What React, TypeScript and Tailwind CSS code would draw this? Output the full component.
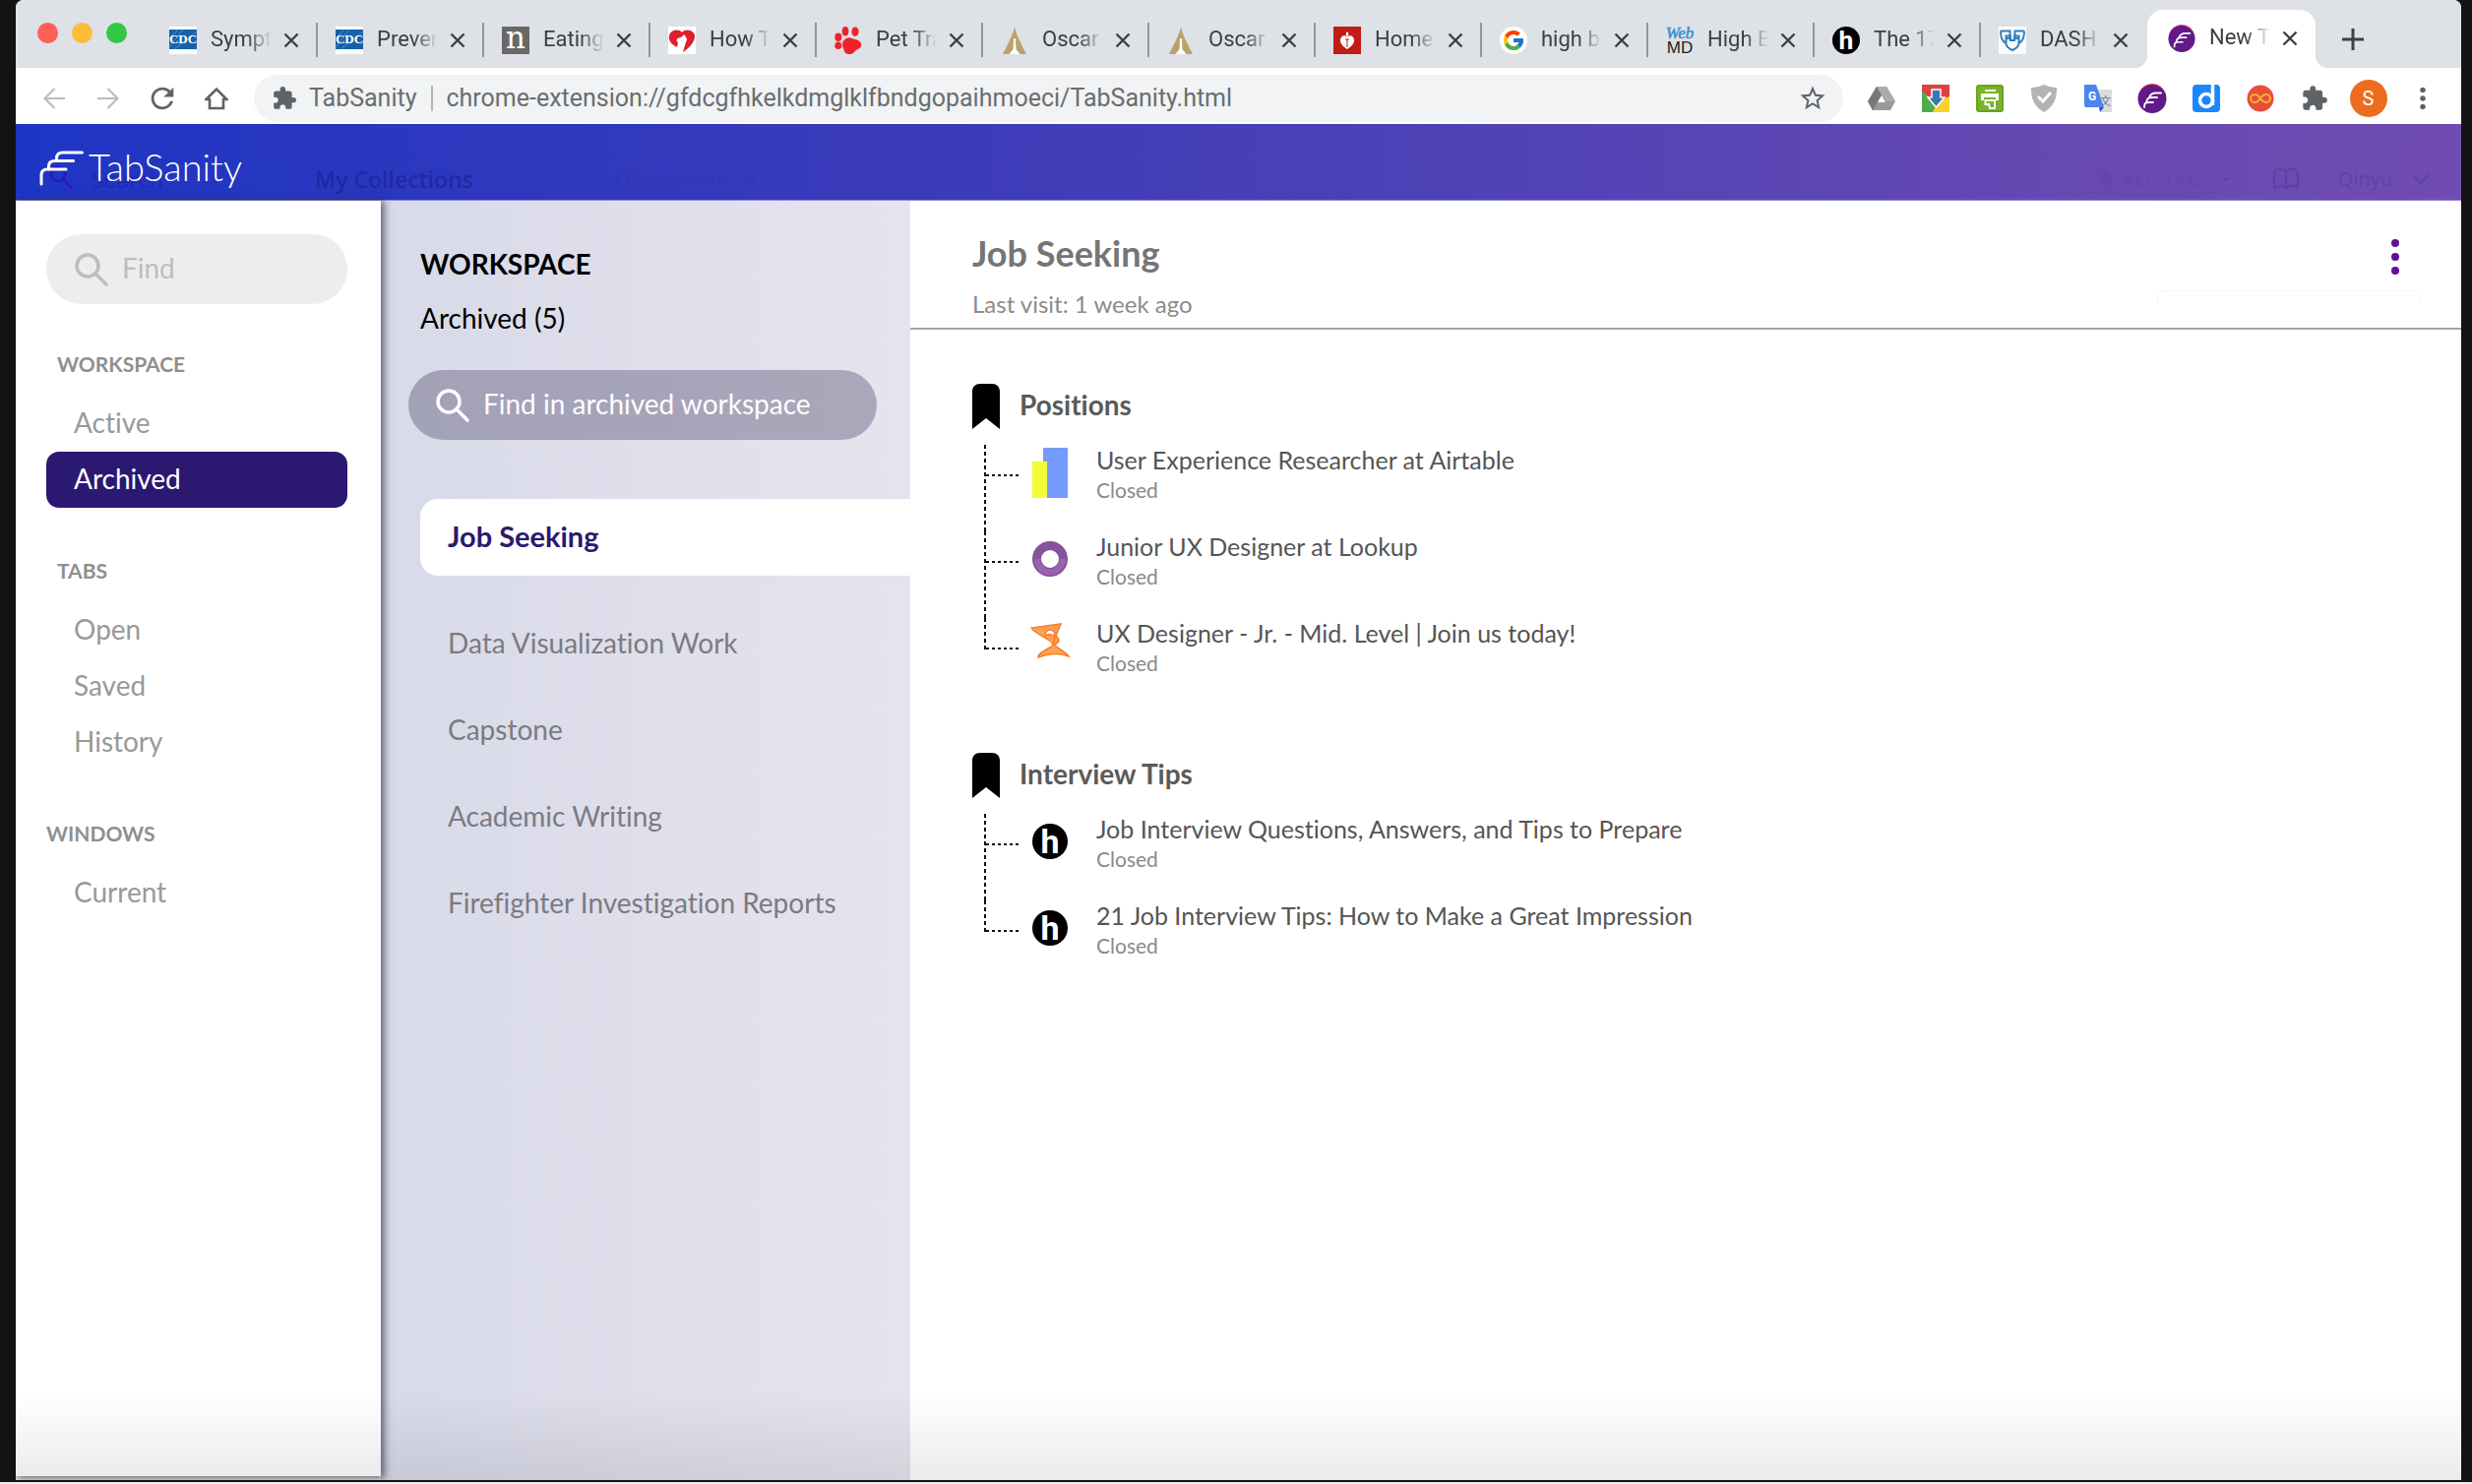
import type { ReactNode } from 'react';
import { FaTag, FaCaretDown } from 'react-icons/fa';
import { FcGoogle } from 'react-icons/fc';
import { MdExtension, MdRefresh, MdStarBorder, MdMoreVert } from 'react-icons/md';

/* ---------- favicons ---------- */

const Cdc = () => (
  <svg viewBox="0 0 28 28" className="size-7" aria-hidden="true">
    <rect width="28" height="28" fill="#fff" />
    <rect y="3" width="28" height="20" fill="#1661ab" />
    <path d="M0 21 14 3M5 23 28 5M0 12 9 3" stroke="#4a8bc9" strokeWidth="1" />
    <text x="14" y="17" textAnchor="middle" fontFamily="Liberation Serif" fontWeight="700" fontSize="13" fill="#fff">CDC</text>
  </svg>
);

const LetterN = () => (
  <svg viewBox="0 0 28 28" className="size-7" aria-hidden="true">
    <rect width="28" height="28" fill="#6a6866" />
    <text x="14" y="22" textAnchor="middle" fontFamily="DejaVu Serif, serif" fontSize="31" fill="#fff">n</text>
  </svg>
);

const HeartDog = () => (
  <svg viewBox="0 0 28 28" className="size-7" aria-hidden="true">
    <rect width="28" height="28" fill="#fff" />
    <path d="M14 6C11 2 3 3 1 9c-1 5 2 9 8 12l1-5-2-2 5-3 3-3 3 5-2 6-2 7c6-4 11-9 12-15C28 4 18 1 14 6Z" fill="#e01f2d" />
    <path d="M9 12l5-1 3-2 2 4-2 4-7-1z" fill="#fff" />
  </svg>
);

const Paw = () => (
  <svg viewBox="0 0 28 28" className="size-7" fill="#ee222d" aria-hidden="true">
    <ellipse cx="11" cy="4.700" rx="3.400" ry="4.700" />
    <ellipse cx="21" cy="5.200" rx="3.600" ry="4.800" />
    <ellipse cx="3.800" cy="10.700" rx="3.500" ry="4.200" />
    <ellipse cx="3.800" cy="19.300" rx="3.500" ry="3.800" />
    <path d="M12 12c3-2 6 0 9 1 4 1 7 3 6 7-1 3-5 3-7 6-2 3-9 3-10-1-.5-3-2-4-2-7 0-3 2-5 4-6Z" />
  </svg>
);

const Oscar = () => (
  <svg viewBox="0 0 28 28" className="size-7" aria-hidden="true">
    <path d="M14 0C15 7 21 18 26 28H2C7 18 13 7 14 0Z" fill="#b9a26a" />
    <path d="M14 12c1.500 0 1.500 2 1 3l.5 8 4 5H8.500l4-5 .5-8c-.5-1-.5-3 1-3Z" fill="#fff" />
  </svg>
);

const HeartTorch = () => (
  <svg viewBox="0 0 28 28" className="size-7" aria-hidden="true">
    <rect width="28" height="28" fill="#bf1d16" />
    <path d="M14 11c-2-3-7-2-7 3 0 4 3 6 7 9 4-3 7-5 7-9 0-5-5-6-7-3Z" fill="#fff" />
    <path d="M14 5c2 2 1.500 4 0 6-1.500-2-2-4 0-6Z" fill="#fff" />
    <path d="M14 13v8M12 13h4" stroke="#bf1d16" strokeWidth="1" />
  </svg>
);

const Google = () => (
  <span className="grid size-7 place-items-center rounded-full bg-white">
    <FcGoogle className="size-6" />
  </span>
);

const WebMd = () => (
  <svg viewBox="0 0 28 28" className="size-7" aria-hidden="true">
    <text x="14" y="12" textAnchor="middle" fontFamily="Liberation Serif" fontStyle="italic" fontSize="17" fill="#2f8fd0" stroke="#2f8fd0" strokeWidth="0.500">Web</text>
    <text x="14" y="27" textAnchor="middle" fontFamily="Liberation Sans" fontSize="17" fill="#222">MD</text>
  </svg>
);

const RoundH = ({ className = 'size-7' }: { className?: string }) => (
  <svg viewBox="0 0 36 36" className={className} aria-hidden="true">
    <circle cx="18" cy="18" r="18" fill="#000" />
    <text x="18" y="30" textAnchor="middle" fontFamily="Roboto" fontWeight="700" fontSize="34" fill="#fff">h</text>
  </svg>
);

const Shields = () => (
  <svg viewBox="0 0 28 28" className="size-7" aria-hidden="true">
    <rect width="28" height="28" fill="#fbfcfa" />
    <g fill="none" stroke="#2f7fbd" strokeWidth="2">
      <path d="M2 4.500h9.500V12H8M2 4.500c0 6 1 10 5 12" />
      <path d="M26 4.500h-9.500V12H20M26 4.500c0 6-1 10-5 12" />
      <path d="M12 9.500H7.500V18c1 3 3 4.500 6.500 6 3.500-1.500 5.500-3 6.500-6V9.500H16V14h-4Z" />
    </g>
  </svg>
);

const Feather = ({ className = 'size-7' }: { className?: string }) => (
  <svg viewBox="0 0 30 30" className={className} aria-hidden="true">
    <circle cx="15" cy="14" r="14" fill="#ee4266" />
    <circle cx="15" cy="15.500" r="14.500" fill="#611a86" />
    <path d="M7 24c0-4 1-5 5-5h4M9 19c1-4 2-5 6-5h5M12 14c1-3 3-4.500 7-4.500h5" fill="none" stroke="#fff" strokeWidth="1.800" strokeLinecap="round" />
  </svg>
);

/* ---------- extension icons ---------- */

const Drive = () => (
  <svg viewBox="0 0 28 28" className="size-7" aria-hidden="true">
    <path d="M9 2h10l9 15-5 9H5l-5-9Z" fill="#9a9a9a" />
    <path d="M9 2 0 17l5 9 9-15Z" fill="#777" />
    <path d="M9 2h10l9 15H18Z" fill="#aaa" />
    <path d="M14 11l4 7h-8Z" fill="#fff" />
  </svg>
);

const Downloader = () => (
  <svg viewBox="0 0 28 28" className="size-7" aria-hidden="true">
    <rect width="28" height="28" fill="#fcd12f" />
    <path d="M0 0h28v12L14 17 0 8Z" fill="#e0403f" />
    <path d="M0 6 14 22l-3 6H0Z" fill="#4fae4b" />
    <path d="M10 5h9v8h4l-8.500 10L6 13h4Z" fill="#3b78b0" stroke="#fff" strokeWidth="1.500" />
  </svg>
);

const Printer = () => (
  <svg viewBox="0 0 28 28" className="size-7" aria-hidden="true">
    <rect width="28" height="28" rx="3" fill="#79b22c" />
    <rect x="1" y="1" width="26" height="26" rx="3" fill="none" stroke="#66a01f" strokeWidth="1.500" />
    <path d="M9 5h11v2H9zM5 9h18v7h-3v-3H8v3H5z" fill="#fff" />
    <path d="M9.500 16h9.500v8h-5l-1-4H9.500Z" fill="none" stroke="#fff" strokeWidth="2" />
  </svg>
);

const ShieldCheck = () => (
  <svg viewBox="0 0 28 28" className="size-7" aria-hidden="true">
    <path d="M14 0c4 2 9 3 13 3 0 12-3 19-13 25C4 22 1 15 1 3c4 0 9-1 13-3Z" fill="#b3b3b3" />
    <path d="M8 12l5 5 8-9" fill="none" stroke="#fff" strokeWidth="3" />
  </svg>
);

const Translate = () => (
  <svg viewBox="0 0 28 28" className="size-7" aria-hidden="true">
    <path d="M13 5h15v23H17Z" fill="#dcdcdc" />
    <text x="21.500" y="21" textAnchor="middle" fontFamily="Noto Sans CJK SC, sans-serif" fontSize="11" fill="#5c7a92">文</text>
    <path d="M0 0h12l8 23H2a2 2 0 0 1-2-2Z" fill="#4a86ee" />
    <path d="M15 23h5l-4 5Z" fill="#2c56c4" />
    <text x="8" y="16" textAnchor="middle" fontFamily="Roboto" fontWeight="700" fontSize="12" fill="#fff">G</text>
  </svg>
);

const LetterD = () => (
  <svg viewBox="0 0 28 28" className="size-7" aria-hidden="true">
    <rect width="28" height="28" rx="4" fill="#1a86ff" />
    <circle cx="14" cy="16" r="6.500" fill="none" stroke="#fff" strokeWidth="3.500" />
    <path d="M20.500 0v21" stroke="#fff" strokeWidth="3.500" />
  </svg>
);

const Infinity8 = () => (
  <svg viewBox="0 0 28 28" className="size-7" aria-hidden="true">
    <circle cx="14" cy="14" r="13.500" fill="#e84c3d" />
    <path d="M14 14c-2-3-4-4-6-4a4 4 0 0 0 0 8c2 0 4-1 6-4s4-4 6-4a4 4 0 0 1 0 8c-2 0-4-1-6-4Z" fill="none" stroke="#f0b429" strokeWidth="2" />
  </svg>
);

/* ---------- browser chrome ---------- */

const tabs: { title: string; icon: ReactNode }[] = [
  { title: 'Symptoms', icon: <Cdc /> },
  { title: 'Prevention', icon: <Cdc /> },
  { title: 'Eating', icon: <LetterN /> },
  { title: 'How To', icon: <HeartDog /> },
  { title: 'Pet Travel', icon: <Paw /> },
  { title: 'Oscar', icon: <Oscar /> },
  { title: 'Oscar', icon: <Oscar /> },
  { title: 'Home', icon: <HeartTorch /> },
  { title: 'high blood', icon: <Google /> },
  { title: 'High Blood', icon: <WebMd /> },
  { title: 'The 17', icon: <RoundH /> },
  { title: 'DASH', icon: <Shields /> },
];

const Cross = () => (
  <svg viewBox="0 0 16 16" className="size-4" aria-hidden="true">
    <path d="M1.500 1.500l13 13M14.500 1.500l-13 13" stroke="#3c4043" strokeWidth="2.400" />
  </svg>
);

function TabContent({ title, icon }: { title: string; icon: ReactNode }) {
  return (
    <>
      <span className="shrink-0">{icon}</span>
      <span className="ml-3.5 w-[62px] overflow-hidden pb-[2px] whitespace-nowrap text-[22px] leading-7 text-[#3c4043] [mask-image:linear-gradient(to_right,black_60%,transparent)]">
        {title}
      </span>
      <button aria-label={`Close ${title}`} className="ml-3 shrink-0">
        <Cross />
      </button>
    </>
  );
}

function TabStrip() {
  return (
    <div className="flex h-[69px] items-start bg-[#dee1e6] font-[Roboto,sans-serif]">
      <div className="mt-[23px] flex w-[138px] shrink-0 gap-3.5 pl-[22px]">
        <button aria-label="Close window" className="size-[21px] rounded-full bg-[#fe5f58]" />
        <button aria-label="Minimize window" className="size-[21px] rounded-full bg-[#febc3b]" />
        <button aria-label="Zoom window" className="size-[21px] rounded-full bg-[#33c748]" />
      </div>
      {tabs.map((tab, i) => (
        <div
          key={i}
          className={`mt-[23px] flex h-[35px] w-[169px] shrink-0 items-center pl-[18px] ${i < tabs.length - 1 ? 'border-r-2 border-[#93979c]' : ''}`}
        >
          <TabContent {...tab} />
        </div>
      ))}
      <div className="relative mt-2.5 flex h-[59px] w-[171px] shrink-0 items-center rounded-t-2xl bg-white pb-[2px] pl-[21px]">
        <span className="absolute bottom-0 -left-3 size-3 bg-[radial-gradient(circle_at_top_left,#dee1e6_12px,#fff_12px)]" />
        <TabContent title="New Tab" icon={<Feather />} />
        <span className="absolute -right-3 bottom-0 size-3 bg-[radial-gradient(circle_at_top_right,#dee1e6_12px,#fff_12px)]" />
      </div>
      <button aria-label="New tab" className="mt-[29px] ml-[27px]">
        <svg viewBox="0 0 22 22" className="size-[22px]" aria-hidden="true">
          <path d="M11 0v22M0 11h22" stroke="#3c4043" strokeWidth="3" />
        </svg>
      </button>
    </div>
  );
}

function ToolButton({ label, children }: { label: string; children: ReactNode }) {
  return (
    <button aria-label={label} className="grid h-12 w-[55px] shrink-0 place-items-center">
      {children}
    </button>
  );
}

function Toolbar() {
  return (
    <div className="flex h-[57px] items-center bg-white pt-[7px] pr-3 pb-[2px] pl-[11px] font-[Roboto,sans-serif]">
      <ToolButton label="Back">
        <svg viewBox="0 0 22 22" className="size-[22px]" fill="none" stroke="#babcbe" strokeWidth="2.200" aria-hidden="true">
          <path d="M22 11H2M11.500 1 1.500 11l10 10" />
        </svg>
      </ToolButton>
      <ToolButton label="Forward">
        <svg viewBox="0 0 22 22" className="size-[22px]" fill="none" stroke="#babcbe" strokeWidth="2.200" aria-hidden="true">
          <path d="M0 11h20M10.500 1l10 10-10 10" />
        </svg>
      </ToolButton>
      <ToolButton label="Reload">
        <MdRefresh className="size-[34px] text-[#5f6368]" />
      </ToolButton>
      <ToolButton label="Home">
        <svg viewBox="0 0 24 24" className="size-6" fill="none" stroke="#5f6368" strokeWidth="2.600" aria-hidden="true">
          <path d="M1.500 13 12 2.500 22.500 13H19v9H5v-9Z" />
        </svg>
      </ToolButton>
      <div className="ml-[11px] flex h-12 min-w-0 flex-1 items-center rounded-full bg-[#f1f3f4] pr-4 pl-[18px] text-[#6a6d70]">
        <MdExtension className="size-[26px] shrink-0 text-[#5f6368]" />
        <span className="ml-3 text-[25px] leading-8">TabSanity</span>
        <span className="mx-3.5 h-[26px] w-[2px] shrink-0 bg-[#b4b7ba]" />
        <input
          aria-label="Address"
          defaultValue="chrome-extension://gfdcgfhkelkdmglklfbndgopaihmoeci/TabSanity.html"
          className="min-w-0 flex-1 bg-transparent text-[25px] leading-8 text-[#6a6d70] outline-none"
        />
        <button aria-label="Bookmark this page">
          <MdStarBorder className="size-[30px] text-[#5f6368]" />
        </button>
      </div>
      <div className="ml-[11px] flex">
        <ToolButton label="Drive"><Drive /></ToolButton>
        <ToolButton label="Downloads"><Downloader /></ToolButton>
        <ToolButton label="Print"><Printer /></ToolButton>
        <ToolButton label="Protection"><ShieldCheck /></ToolButton>
        <ToolButton label="Translate"><Translate /></ToolButton>
        <ToolButton label="TabSanity"><Feather className="size-[30px]" /></ToolButton>
        <ToolButton label="Dictionary"><LetterD /></ToolButton>
        <ToolButton label="Infinity"><Infinity8 /></ToolButton>
        <ToolButton label="Extensions"><MdExtension className="size-7 text-[#5f6368]" /></ToolButton>
        <ToolButton label="Profile">
          <span className="grid size-[38px] place-items-center rounded-full bg-[#ee6c1f] text-[20px] leading-6 text-white">S</span>
        </ToolButton>
        <ToolButton label="Menu"><MdMoreVert className="size-[34px] text-[#5f6368]" /></ToolButton>
      </div>
    </div>
  );
}

/* ---------- application ---------- */

function Header() {
  return (
    <header className="relative flex h-[78px] items-center border-b border-[#8d85d6] bg-[linear-gradient(to_right,#1e35c4,#3a3bb9_36%,#5544b5_66%,#6749b2_84%,#704cb1)] pl-6">
      <div aria-hidden="true" className="absolute inset-0 flex items-end overflow-hidden pb-[5px] pl-[34px] font-['Open_Sans',sans-serif] text-[23px] leading-8 text-[#17208f]/60">
        <svg viewBox="0 0 24 24" className="mb-1.5 size-6" fill="none" stroke="#3014b8" strokeOpacity="0.800" strokeWidth="3">
          <circle cx="9" cy="9" r="7" />
          <path d="M14 14l9 9" />
        </svg>
        <span className="ml-[19px] w-[227px] opacity-70">Search</span>
        <span className="font-semibold">My Collections</span>
        <span className="ml-[84px] text-[22px] opacity-15">+&nbsp; Add Organization</span>
        <div className="mr-8 ml-auto flex items-center text-[#4d2c98]/40">
          <FaTag className="size-4 opacity-30" />
          <span className="ml-2 text-[18px] tracking-widest opacity-50">ALL TAGS</span>
          <FaCaretDown className="ml-1.5 size-3 opacity-70" />
          <svg viewBox="0 0 26 22" className="ml-[42px] h-[22px] w-[26px]" fill="none" stroke="currentColor" strokeWidth="2">
            <path d="M13 3v16M1 20V4c3-4 9-4 12-1 3-3 9-3 12 1v16c-4-3-9-3-12 0-3-3-8-3-12 0Z" />
          </svg>
          <span className="ml-10 text-[20px]">Qinyu</span>
          <svg viewBox="0 0 18 10" className="ml-5 h-2.5 w-[18px]" fill="none" stroke="currentColor" strokeWidth="2.500">
            <path d="M1 1l8 8 8-8" />
          </svg>
        </div>
      </div>
      <a href="#home" className="relative flex items-center gap-1 pt-3 text-white">
        <svg viewBox="0 0 46 36" className="h-9 w-[46px]" fill="none" stroke="#fff" strokeWidth="3" strokeLinecap="round" aria-hidden="true">
          <path d="M2 34V25c0-4 2-6 6-6h19" />
          <path d="M9.500 19v-3c0-4 2-5.500 6-5.500h19" />
          <path d="M17.500 10V8c0-4 2-6 6-6h20" />
        </svg>
        <span className="pb-1 font-[Lato,sans-serif] text-[38px] leading-10 font-light">TabSanity</span>
      </a>
    </header>
  );
}

const SearchIcon = () => (
  <svg viewBox="0 0 34 34" className="size-[34px] shrink-0" fill="none" stroke="currentColor" strokeWidth="3.500" strokeLinecap="round" aria-hidden="true">
    <circle cx="13" cy="13" r="11" />
    <path d="M21 21l11 11" />
  </svg>
);

function NavGroup({ title, items, current, wide }: { title: string; items: string[]; current?: string; wide?: boolean }) {
  return (
    <section>
      <h2 className={`mb-5 text-[21px] leading-6 font-bold text-[#8f8f8f] ${wide ? '' : 'pl-[11px]'}`}>{title}</h2>
      <ul>
        {items.map((item) => (
          <li key={item}>
            <a
              href={`#${item}`}
              className={`flex h-[57px] items-center rounded-[13px] pb-[3px] pl-7 text-[28px] leading-8 ${item === current ? 'bg-[#2b1870] text-white' : 'text-[#999]'}`}
            >
              {item}
            </a>
          </li>
        ))}
      </ul>
    </section>
  );
}

function Sidebar() {
  return (
    <nav className="relative z-10 mb-1 w-[371px] shrink-0 bg-white pt-[34px] pr-[34px] pl-[31px] shadow-[2px_1px_8px_1px_rgba(40,45,70,0.75)]">
      <label className="flex h-[71px] items-center gap-3.5 rounded-full bg-[#ededed] pl-[29px] text-[#bdbdbd]">
        <SearchIcon />
        <input aria-label="Find" placeholder="Find" className="w-full min-w-0 bg-transparent pb-[3px] text-[28px] leading-8 outline-none placeholder:text-[#bdbdbd]" />
      </label>
      <div className="mt-[49px] flex flex-col gap-[52px]">
        <NavGroup title="WORKSPACE" items={['Active', 'Archived']} current="Archived" />
        <NavGroup title="TABS" items={['Open', 'Saved', 'History']} />
        <NavGroup title="WINDOWS" items={['Current']} wide />
      </div>
    </nav>
  );
}

const workspaces = ['Data Visualization Work', 'Capstone', 'Academic Writing', 'Firefighter Investigation Reports'];

function WorkspacePanel() {
  return (
    <aside className="w-[538px] shrink-0 bg-linear-to-r from-[#d8dae9] to-[#e7e3ee] pt-[46px]">
      <h2 className="pl-10 text-[28px] leading-9 font-bold text-black">WORKSPACE</h2>
      <p className="mt-[19px] pl-10 text-[28px] leading-9 text-black">Archived (5)</p>
      <label className="mt-[35px] mr-[34px] ml-7 flex h-[71px] items-center gap-3.5 rounded-full bg-[#231f46]/30 pl-7 text-white">
        <SearchIcon />
        <input aria-label="Find in archived workspace" placeholder="Find in archived workspace" className="w-full min-w-0 bg-transparent pb-[3px] text-[28px] leading-8 outline-none placeholder:text-white" />
      </label>
      <ul className="mt-[60px] pl-10 text-[28px] leading-8">
        <li className="mb-[25px]">
          <a href="#job-seeking" className="flex h-[78px] items-center rounded-l-[18px] bg-white pb-[3px] pl-7 text-[29px] font-bold text-[#2b1870]">Job Seeking</a>
        </li>
        {workspaces.map((name) => (
          <li key={name}>
            <a href={`#${name}`} className="flex h-[88px] items-center pb-[2px] pl-7 text-[#7b7b80]">{name}</a>
          </li>
        ))}
      </ul>
    </aside>
  );
}

const AirtableMark = () => (
  <svg viewBox="0 0 40 52" className="h-[52px] w-10" aria-hidden="true">
    <rect x="13" y="1" width="25" height="51" fill="#759bfb" />
    <rect x="2" y="15" width="15" height="37" fill="#f1fb36" />
  </svg>
);

const LookupMark = () => (
  <svg viewBox="0 0 36 36" className="size-9" aria-hidden="true">
    <circle cx="18" cy="18" r="13.500" fill="none" stroke="#84539a" strokeWidth="9" />
    <path d="M18 31.500A13.500 13.500 0 0 1 5 18" fill="none" stroke="#9864ad" strokeWidth="6" />
    <path d="M18 31.500A13.500 13.500 0 0 0 31 18" fill="none" stroke="#9864ad" strokeWidth="6" />
  </svg>
);

const HourglassMark = () => (
  <svg viewBox="0 0 40 46" className="h-[46px] w-10" fill="#fda252" stroke="#fb7a2b" strokeWidth="1.500" aria-hidden="true">
    <path d="M23 22C20 15 5 12 1 5L31 1l-5 12c5 4 3 8-3 9Z" />
    <circle cx="20" cy="12" r="5" fill="#fff" />
    <path d="M24 22C30 27 37 30 39 34c-10-4-20-3-31 1 0-5 8-7 16-13Z" />
    <path d="M15 13c2-2 8-2 10 1l-2 8" fill="#fda252" />
  </svg>
);

type Bookmark = { title: string; icon: ReactNode };

const groups: { name: string; items: Bookmark[] }[] = [
  {
    name: 'Positions',
    items: [
      { title: 'User Experience Researcher at Airtable', icon: <AirtableMark /> },
      { title: 'Junior UX Designer at Lookup', icon: <LookupMark /> },
      { title: 'UX Designer - Jr. - Mid. Level | Join us today!', icon: <HourglassMark /> },
    ],
  },
  {
    name: 'Interview Tips',
    items: [
      { title: 'Job Interview Questions, Answers, and Tips to Prepare', icon: <RoundH className="size-9" /> },
      { title: '21 Job Interview Tips: How to Make a Great Impression', icon: <RoundH className="size-9" /> },
    ],
  },
];

function BookmarkGroup({ name, items }: { name: string; items: Bookmark[] }) {
  return (
    <section>
      <h2 className="flex h-[46px] items-center gap-5 text-[28px] leading-8 font-bold text-[#5a5a5a]">
        <svg viewBox="0 0 28 46" className="h-[46px] w-7" aria-hidden="true">
          <path d="M0 46V8c0-5 3-8 8-8h12c5 0 8 3 8 8v38L14 35Z" fill="#000" />
        </svg>
        <span className="pb-1">{name}</span>
      </h2>
      <ul className="mt-4 pl-3">
        {items.map((item, i) => (
          <li key={item.title} className="flex h-[88px]">
            <span
              className={`w-[2px] shrink-0 bg-[repeating-linear-gradient(to_bottom,#111_0_4px,transparent_4px_7px)] ${i === items.length - 1 ? 'h-8' : 'h-full'}`}
            />
            <span className="mt-[30px] h-[2px] w-[33px] shrink-0 bg-[repeating-linear-gradient(to_right,#111_0_3px,transparent_3px_6px)]" />
            <span className="ml-3 grid h-14 w-10 shrink-0 place-items-center">{item.icon}</span>
            <span className="ml-[27px]">
              <a href={`#${item.title}`} className="block text-[25px] leading-[30px] text-[#555]">{item.title}</a>
              <span className="block text-[21px] leading-8 text-[#8a8a8a]">Closed</span>
            </span>
          </li>
        ))}
      </ul>
    </section>
  );
}

function Detail() {
  return (
    <main className="min-w-0 flex-1 bg-white">
      <div className="relative flex h-[131px] items-start justify-between border-b-2 border-[#a6a6a6] pr-12 pl-[63px]">
        <div className="pt-[31px]">
          <h1 className="text-[36px] leading-[44px] font-bold text-[#757575]">Job Seeking</h1>
          <p className="mt-4 text-[24px] leading-7 text-[#8b8b8b]">Last visit: 1 week ago</p>
        </div>
        <button aria-label="Workspace options" className="mt-[39px] flex w-[38px] flex-col items-center gap-1.5">
          <span className="size-2 rounded-full bg-[#5f1096]" />
          <span className="size-2 rounded-full bg-[#5f1096]" />
          <span className="size-2 rounded-full bg-[#5f1096]" />
        </button>
        <span className="absolute right-[41px] bottom-6 h-3.5 w-[268px] rounded-t-lg border border-b-0 border-[#f6f6f6]" />
      </div>
      <div className="flex flex-col gap-[49px] pt-[55px] pl-[63px]">
        {groups.map((group) => (
          <BookmarkGroup key={group.name} {...group} />
        ))}
      </div>
    </main>
  );
}

export default function App() {
  return (
    <div className="flex min-h-screen flex-col bg-[#ececec] pb-[2px]">
      <div className="flex flex-1 flex-col bg-[#131313] pr-[11px] pb-[2px] pl-4">
        <div className="relative flex flex-1 flex-col overflow-hidden rounded-t-lg bg-white">
          <TabStrip />
          <Toolbar />
          <Header />
          <div className="flex flex-1 font-[Lato,sans-serif] [font-variant-ligatures:none]">
            <Sidebar />
            <WorkspacePanel />
            <Detail />
          </div>
          <div className="pointer-events-none absolute inset-x-0 bottom-0 z-20 h-[90px] bg-linear-to-b from-transparent to-black/8" />
        </div>
      </div>
    </div>
  );
}
